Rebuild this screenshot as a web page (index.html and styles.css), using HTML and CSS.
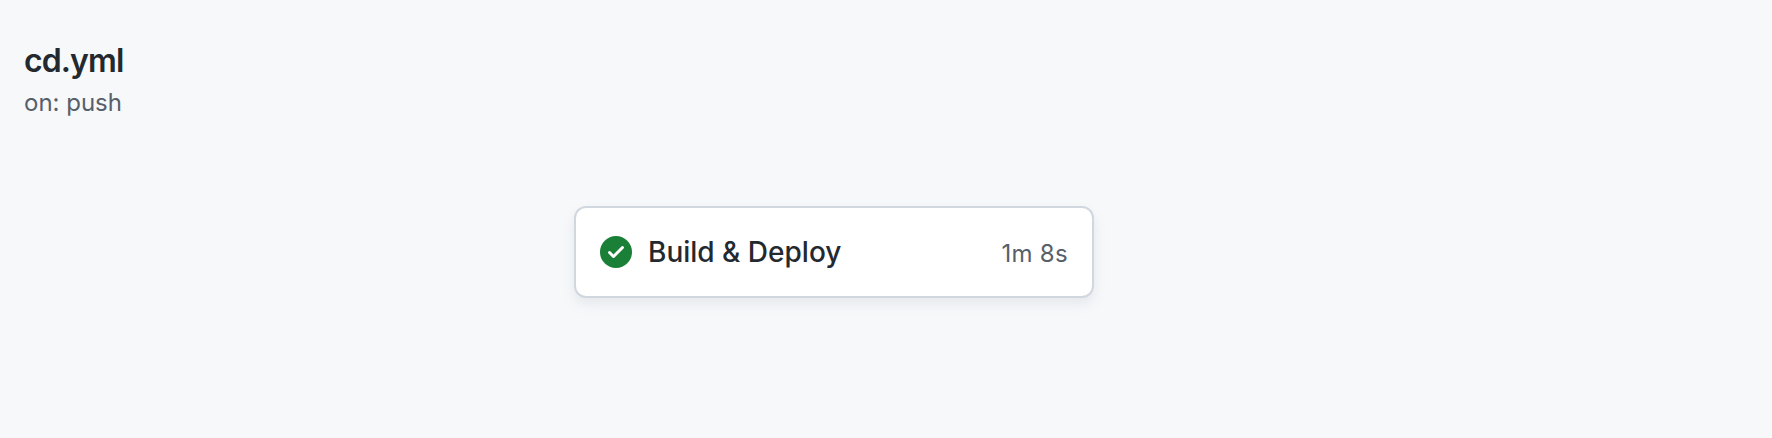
FILE: index.html
```html
<!DOCTYPE html>
<html lang="en">
<head>
  <meta charset="UTF-8" />
  <meta name="viewport" content="width=device-width, initial-scale=1" />
  <title>cd.yml</title>
  <link rel="stylesheet" href="styles.css">
</head>
<body>

<header class="workflow-header">
  <h1 class="workflow-name">cd.yml</h1>
  <p class="workflow-trigger">on: push</p>
</header>

<main class="workflow-graph">
  <div class="job-card">
    <svg class="job-icon" viewBox="0 0 16 16" width="32" height="32" aria-hidden="true">
      <path d="M8 16A8 8 0 1 1 8 0a8 8 0 0 1 0 16Zm3.78-9.72a.751.751 0 0 0-.018-1.042.751.751 0 0 0-1.042-.018L6.75 9.19 5.28 7.72a.751.751 0 0 0-1.042.018.751.751 0 0 0-.018 1.042l2 2a.75.75 0 0 0 1.06 0Z"></path>
    </svg>
    <span class="job-name">Build &amp; Deploy</span>
    <span class="job-time">1m 8s</span>
  </div>
</main>

</body>
</html>
```

FILE: styles.css
```css
body {
  font-family: Inter, sans-serif;
  background-color: #f6f8fa;
  color: #24292f;
  margin: 0;
  height: 438px;
  overflow: hidden;
}
.workflow-header {
  padding: 37px 24px 0;
}
.workflow-name {
  margin: 0;
  font-size: 32px;
  line-height: 48px;
  font-weight: 600;
  letter-spacing: -0.9px;
}
.workflow-trigger {
  margin: 0;
  font-size: 24px;
  line-height: 36px;
  color: #57606a;
}
.workflow-graph {
  padding-left: 574px;
  padding-top: 85px;
}
.job-card {
  display: flex;
  align-items: center;
  box-sizing: border-box;
  width: 520px;
  height: 92px;
  padding: 0 24px;
  background: white;
  border: 2px solid #d0d7de;
  border-radius: 12px;
  box-shadow: 0 6px 12px rgba(140,149,159,0.15);
}
.job-icon {
  fill: #1a7f37;
  margin-right: 16px;
}
.job-name {
  font-size: 28px;
  font-weight: 500;
}
.job-time {
  margin-left: auto;
  padding-top: 2px;
  font-size: 24px;
  letter-spacing: 0.3px;
  color: #57606a;
}
```
